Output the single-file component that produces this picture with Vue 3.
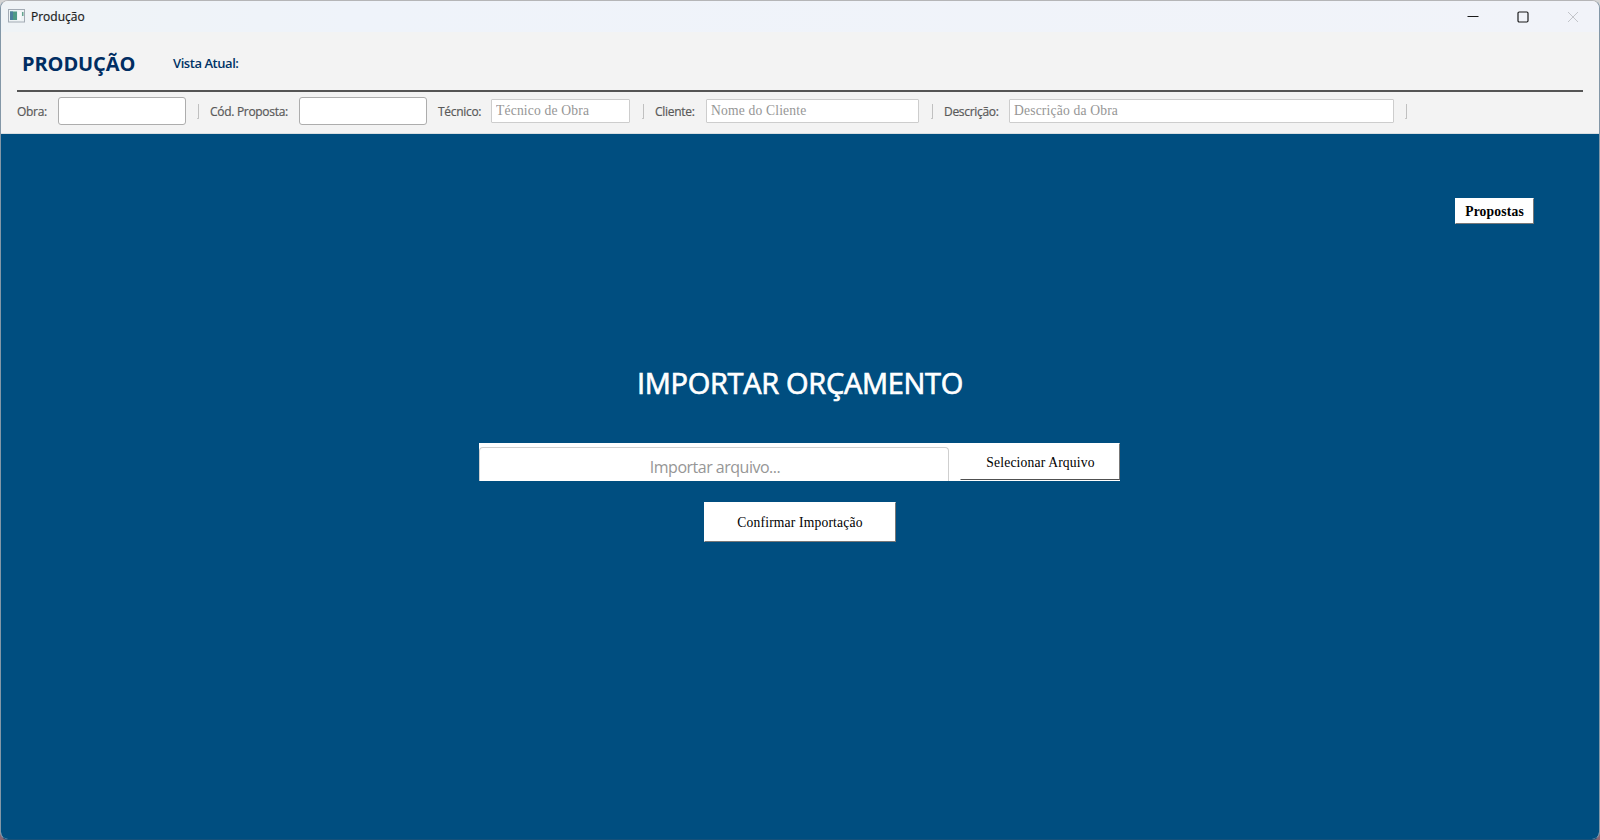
<script setup>
import { ref } from 'vue';

const obra = ref('');
const codProposta = ref('');
const tecnico = ref('');
const cliente = ref('');
const descricao = ref('');
const arquivo = ref('');
</script>

<template>
  <div class="desktop">
    <div class="window">
      <div class="titleBar">
        <svg class="appIcon" width="17" height="14" viewBox="0 0 17 14">
          <rect x="0.5" y="0.5" width="16" height="12.5" fill="#eef3f5" stroke="#a3abb4" />
          <rect x="2" y="2.5" width="7" height="8.5" fill="#4f9a86" />
          <rect x="2" y="2.5" width="3" height="8.5" fill="#4d7f9c" />
          <rect x="10" y="2.5" width="3" height="8.5" fill="#f8fafa" />
          <rect x="14" y="3" width="1.5" height="4" fill="#65a58f" />
        </svg>
        <span class="windowTitle">Produção</span>
        <div class="windowButtons">
          <svg width="12" height="12" viewBox="0 0 12 12"><path d="M0.5 5.5h11" stroke="#1a1a1a" /></svg>
          <svg width="12" height="12" viewBox="0 0 12 12"><rect x="1" y="1" width="10" height="10" rx="1.2" fill="none" stroke="#1a1a1a" stroke-width="1.2" /></svg>
          <svg width="12" height="12" viewBox="0 0 12 12"><path d="M1 1l10 10M11 1L1 11" stroke="#c3c5ca" /></svg>
        </div>
      </div>

      <div class="header">
        <h1 class="pageTitle">PRODUÇÃO</h1>
        <span class="currentView">Vista Atual:</span>
      </div>

      <div class="filters">
        <label class="obraLabel">Obra:</label>
        <input v-model="obra" class="editable obra">
        <i class="separator"></i>
        <label class="codLabel">Cód. Proposta:</label>
        <input v-model="codProposta" class="editable cod">
        <label class="tecnicoLabel">Técnico:</label>
        <input v-model="tecnico" class="info tecnico" placeholder="Técnico de Obra">
        <i class="separator"></i>
        <label class="clienteLabel">Cliente:</label>
        <input v-model="cliente" class="info cliente" placeholder="Nome do Cliente">
        <i class="separator"></i>
        <label class="descricaoLabel">Descrição:</label>
        <input v-model="descricao" class="info descricao" placeholder="Descrição da Obra">
        <i class="separator"></i>
      </div>

      <div class="content">
        <button class="proposals"><span>Propostas</span></button>
        <h2 class="importTitle">IMPORTAR ORÇAMENTO</h2>
        <div class="importRow">
          <input v-model="arquivo" class="fileInput" placeholder="Importar arquivo...">
          <button class="selectFile"><span>Selecionar Arquivo</span></button>
        </div>
        <button class="confirm"><span>Confirmar Importação</span></button>
      </div>
    </div>
  </div>
</template>

<style>
body {
  margin: 0;
  overflow: hidden;
}
</style>

<style scoped>
* {
  box-sizing: border-box;
}

.desktop {
  width: 1600px;
  height: 840px;
  background: linear-gradient(#d5d5d5 0, #b9b9b9 300px, #75667c 560px, #8b6672 840px);
  font-family: "Open Sans", "Noto Sans", sans-serif;
}

.window {
  width: 1600px;
  height: 840px;
  border: 1px solid #b5b5b7;
  border-bottom-color: #175078;
  border-left-color: #8397a7;
  border-right-color: #8397a7;
  border-radius: 8px;
  background: #f3f3f3;
  overflow: hidden;
  display: flex;
  flex-direction: column;
}

.titleBar {
  height: 31px;
  flex: none;
  display: flex;
  align-items: center;
  padding: 0 20px 0 7px;
  background: linear-gradient(90deg, #eff3f6, #eff3fa 350px, #f1f3f9);
}

.appIcon {
  margin-bottom: 1px;
}

.windowTitle {
  margin-left: 6px;
  font-size: 12px;
  line-height: 16px;
  color: #1b1b1b;
  -webkit-text-stroke: 0.2px #1b1b1b;
}

.windowButtons {
  margin-left: auto;
  display: flex;
  gap: 38px;
}

.header {
  height: 60px;
  flex: none;
  margin: 0 16px;
  border-bottom: 2px solid #555;
  display: flex;
  align-items: center;
  padding-left: 5px;
  padding-top: 5px;
}

.pageTitle {
  margin: 0;
  width: 151px;
  font-size: 20px;
  line-height: 28px;
  font-weight: 700;
  letter-spacing: -0.1px;
  color: #002d62;
  white-space: nowrap;
}

.currentView {
  padding-bottom: 2px;
  font-size: 13px;
  line-height: 18px;
  font-weight: 600;
  letter-spacing: -0.45px;
  color: #003366;
}

.filters {
  height: 42px;
  flex: none;
  display: flex;
  align-items: center;
  padding: 0 0 3px 16px;
  border-bottom: 1px solid #d9dee1;
}

label {
  flex: none;
  padding-top: 2px;
  font-size: 12px;
  line-height: 18px;
  font-weight: 400;
  letter-spacing: -0.3px;
  color: #595959;
  -webkit-text-stroke: 0.2px #595959;
  white-space: nowrap;
}

input {
  flex: none;
  outline: none;
  background: #fff;
  padding: 0 4px;
}

.editable {
  width: 128px;
  height: 28px;
  border: 1px solid #adadad;
  border-radius: 3px;
}

.info {
  height: 24px;
  border: 1px solid #cdcdcd;
  border-radius: 1px;
  padding: 0 4px;
  font: 13.6px "Liberation Serif", serif;
  letter-spacing: 0.17px;
}

input::placeholder {
  color: #969696;
  opacity: 1;
}

.separator {
  flex: none;
  width: 2px;
  height: 15px;
  border-right: 1px solid #c0c0c0;
  border-bottom: 1px solid #c8c8c8;
}

.obraLabel {
  width: 41px;
}

.obra {
  margin-right: 11px;
}

.codLabel {
  width: 89px;
  margin-left: 11px;
}

.cod {
  margin-right: 11px;
}

.tecnicoLabel {
  width: 53px;
}

.tecnico {
  width: 139px;
  margin-right: 12px;
}

.clienteLabel {
  width: 51px;
  margin-left: 11px;
}

.cliente {
  width: 213px;
  margin-right: 12px;
}

.descricaoLabel {
  width: 65px;
  margin-left: 11px;
}

.descricao {
  width: 385px;
  margin-right: 11px;
}

.content {
  flex: 1;
  background: #004e80;
  display: flex;
  flex-direction: column;
  align-items: center;
}

button {
  padding: 2px 0 0;
  border: 1px solid #fff;
  border-right-color: #777;
  border-bottom-color: #777;
  border-radius: 0;
  background: #fff;
  color: #000;
  font: 13.6px/16px "Liberation Serif", serif;
  letter-spacing: 0.17px;
}

.proposals {
  width: 79px;
  height: 26px;
  margin: 64px 65px 0 0;
  align-self: flex-end;
  font-weight: 700;
}

.importTitle {
  margin: 138px 0 0;
  font-size: 29px;
  line-height: 42px;
  font-weight: 400;
  letter-spacing: -0.3px;
  color: #fff;
  -webkit-text-stroke: 0.7px #fff;
  white-space: nowrap;
}

.importRow {
  width: 641px;
  height: 38px;
  margin: 39px 1px 0 0;
  background: #fff;
  display: flex;
  justify-content: space-between;
}

.fileInput {
  width: 470px;
  height: 34px;
  margin-top: 4px;
  border: 1px solid #cfcfcf;
  border-bottom: none;
  border-radius: 4px 4px 0 0;
  padding: 5px 3px 0 5px;
  font-family: "Open Sans", "Noto Sans", sans-serif;
  font-size: 16px;
  letter-spacing: -0.5px;
  text-align: center;
}

.selectFile {
  width: 160px;
  height: 37px;
  padding: 3px 0 0 1px;
  border-bottom-color: #505050;
}

.confirm {
  width: 192px;
  height: 40px;
  margin-top: 21px;
}
</style>
